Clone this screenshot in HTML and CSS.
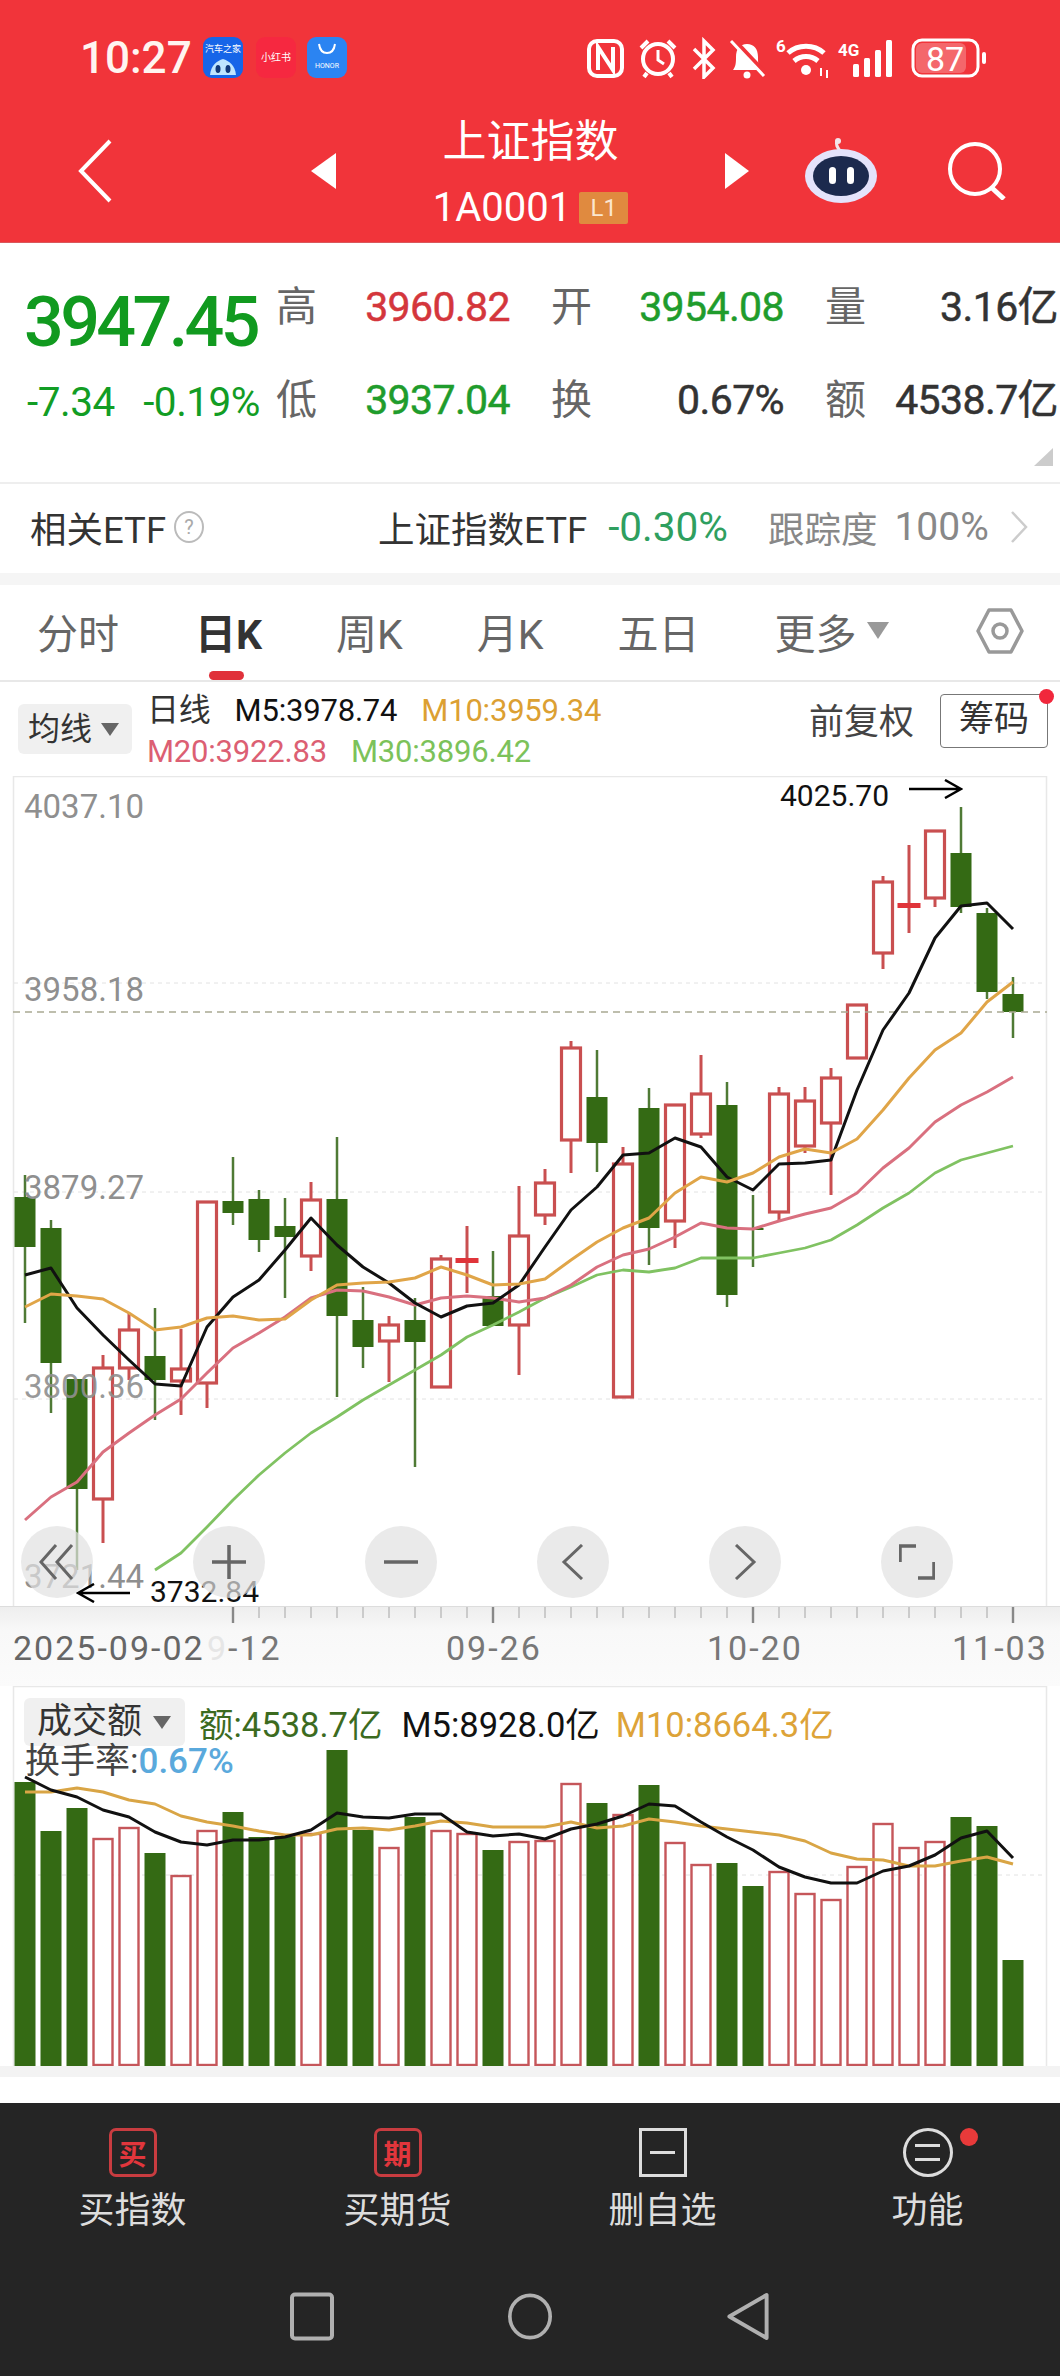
FILE: index.html
```html
<!DOCTYPE html>
<html lang="zh-CN">
<head>
    <meta charset="UTF-8">
    <meta name="viewport" content="width=device-width, initial-scale=1.0">
    <title>上证指数</title>
    <link rel="stylesheet" href="styles.css">
</head>
<body>
    <!-- 顶部红色区域 -->
    <header class="top">
        <div class="status">
            <span class="clock">10:27</span>
            <div class="app app-car">
                <span class="app-car-name">汽车之家</span>
                <svg class="app-car-face" viewBox="0 0 26 16"><path d="M0 16C1 6 7 2 13 0c6 2 12 6 13 16z" fill="#bfe6ff"/><ellipse cx="8" cy="10" rx="2.5" ry="4" fill="#123a7a"/><ellipse cx="18" cy="10" rx="2.5" ry="4" fill="#123a7a"/></svg>
            </div>
            <div class="app app-red">小红书</div>
            <div class="app app-honor">
                <svg class="honor-smile" viewBox="0 0 20 12"><path d="M2 1c1 7 4 9 8 9s7-2 8-9" fill="none" stroke="#fff" stroke-width="2"/></svg>
                <span class="honor-name">HONOR</span>
            </div>
            <svg class="status-icons" viewBox="585 37 399 42">
                <g fill="none" stroke="#fff" stroke-width="4">
                    <rect x="587" y="41" width="33" height="35" rx="8"/>
                    <path d="M596 70V47l15 23V47"/>
                    <circle cx="656" cy="59" r="15"/>
                    <path d="M656 50v10l6 4" stroke-width="3"/>
                    <path d="M639 48l7-7M673 48l-7-7M645 73l-3 4M667 73l3 4" stroke-width="4"/>
                    <path d="M692 49l19 19-9 9V41l9 9-19 19" stroke-width="3.5"/>
                    <path d="M731 70c3-4 3-8 3-13 0-8 4-13 11-13s11 5 11 13c0 5 0 9 3 13z" fill="#fff" stroke="none"/>
                    <path d="M732 41l33 35" stroke="#f1343a" stroke-width="6"/>
                    <path d="M729 41l33 35" stroke-width="3"/>
                    <path d="M786 53c10-9 26-9 36 0M792 61c7-6 17-6 24 0" stroke-width="5"/>
                </g>
                <circle cx="745" cy="75" r="3.5" fill="#fff"/>
                <circle cx="804" cy="70" r="5" fill="#fff"/>
                <text x="774" y="52" class="status-small">6</text>
                <path d="M819 68v8M825 78v-8" stroke="#fff" stroke-width="2"/>
                <text x="836" y="56" class="status-small">4G</text>
                <g fill="#fff">
                    <rect x="851" y="64" width="6" height="13" rx="1.5"/>
                    <rect x="862" y="58" width="6" height="19" rx="1.5"/>
                    <rect x="873" y="50" width="6" height="27" rx="1.5"/>
                    <rect x="884" y="40" width="6" height="37" rx="1.5"/>
                    <rect x="980" y="52" width="4" height="12" rx="2"/>
                </g>
                <rect x="911" y="40" width="65" height="36" rx="9" fill="none" stroke="#fff" stroke-width="3"/>
                <rect x="914" y="43" width="50" height="30" rx="6" fill="#fff" opacity="0.25"/>
                <text x="943" y="71" class="status-battery">87</text>
            </svg>
        </div>
        <div class="nav">
            <svg class="nav-back" viewBox="0 0 34 64"><path d="M32 2L3 32l29 30" fill="none" stroke="#fff" stroke-width="4"/></svg>
            <span class="tri-left"></span>
            <div class="nav-center">
                <div class="nav-title">上证指数</div>
                <div class="nav-code">1A0001 <span class="level">L1</span></div>
            </div>
            <span class="tri-right"></span>
            <svg class="nav-robot" viewBox="0 0 73 66">
                <path d="M36 14C33 10 30 7 32 3" fill="none" stroke="#f3e5ea" stroke-width="3"/>
                <circle cx="33" cy="3" r="3" fill="#f3e5ea"/>
                <ellipse cx="36" cy="38" rx="36" ry="27" fill="#e4e3fb"/>
                <ellipse cx="36" cy="38" rx="28" ry="20" fill="#1c2a4e"/>
                <rect x="24" y="29" width="7" height="17" rx="3.5" fill="#fff"/>
                <rect x="42" y="29" width="7" height="17" rx="3.5" fill="#fff"/>
            </svg>
            <svg class="nav-search" viewBox="0 0 59 58"><circle cx="28" cy="27" r="25" fill="none" stroke="#fff" stroke-width="4"/><path d="M45 46l12 11" stroke="#fff" stroke-width="5"/></svg>
        </div>
    </header>

    <!-- 行情数据 -->
    <section class="quote">
        <div class="price">3947.45</div>
        <div class="cell"><span class="cell-label">高</span><span class="cell-value up">3960.82</span></div>
        <div class="cell"><span class="cell-label">开</span><span class="cell-value down">3954.08</span></div>
        <div class="cell"><span class="cell-label">量</span><span class="cell-value">3.16亿</span></div>
        <div class="change"><span>-7.34</span><span>-0.19%</span></div>
        <div class="cell"><span class="cell-label">低</span><span class="cell-value down">3937.04</span></div>
        <div class="cell"><span class="cell-label">换</span><span class="cell-value">0.67%</span></div>
        <div class="cell"><span class="cell-label">额</span><span class="cell-value">4538.7亿</span></div>
        <span class="corner"></span>
    </section>

    <section class="etf">
        <span class="etf-name">相关ETF</span>
        <span class="etf-help">?</span>
        <span class="etf-fund">上证指数ETF</span>
        <span class="etf-change">-0.30%</span>
        <span class="etf-track">跟踪度</span>
        <span class="etf-percent">100%</span>
        <svg class="etf-arrow" viewBox="0 0 18 32"><path d="M2 1l14 15L2 31" fill="none" stroke="#ccc" stroke-width="2.5"/></svg>
    </section>

    <div class="band"></div>

    <nav class="tabs">
        <span class="tab">分时</span>
        <span class="tab tab-active">日K</span>
        <span class="tab">周K</span>
        <span class="tab">月K</span>
        <span class="tab">五日</span>
        <span class="tab tab-more">更多<i class="tab-tri"></i></span>
        <svg class="tab-gear" viewBox="0 0 48 46"><path d="M13 2h22l11 21-11 21H13L2 23z" fill="none" stroke="#999" stroke-width="3.5" stroke-linejoin="round"/><circle cx="24" cy="23" r="7" fill="none" stroke="#999" stroke-width="3.5"/></svg>
    </nav>

    <section class="legend">
        <div class="legend-btn">均线<i class="small-tri"></i></div>
        <div class="legend-lines">
            <div class="legend-row"><span class="legend-name">日线</span><span class="m5">M5:3978.74</span><span class="m10">M10:3959.34</span></div>
            <div class="legend-row"><span class="m20">M20:3922.83</span><span class="m30">M30:3896.42</span></div>
        </div>
        <span class="legend-fq">前复权</span>
        <div class="legend-chip">筹码<i class="chip-dot"></i></div>
    </section>

    <!-- K线图 -->
    <section class="kline">
        <svg id="klineChart" class="chart-svg" width="1060" height="830" viewBox="0 776 1060 830"></svg>
        <span class="scale scale-1">4037.10</span>
        <span class="scale scale-2">3958.18</span>
        <span class="scale scale-3">3879.27</span>
        <span class="scale scale-4">3800.36</span>
        <span class="scale scale-5">3721.44</span>
        <span class="mark mark-high">4025.70</span>
        <span class="mark mark-low">3732.84</span>
        <svg class="mark-arrow arrow-high" viewBox="0 0 54 20"><path d="M0 10h52M36 1l16 9-16 9" fill="none" stroke="#000" stroke-width="2.5"/></svg>
        <svg class="mark-arrow arrow-low" viewBox="0 0 54 20"><path d="M54 10H2M18 1L2 10l16 9" fill="none" stroke="#000" stroke-width="2.5"/></svg>
        <div class="zoom-bar">
            <span class="zoom-btn"><svg viewBox="0 0 36 36"><path d="M17 1L2 18l15 17M33 1L18 18l15 17" fill="none" stroke="#666" stroke-width="3"/></svg></span>
            <span class="zoom-btn"><svg viewBox="0 0 36 36"><path d="M1 18h34M18 1v34" fill="none" stroke="#666" stroke-width="3.5"/></svg></span>
            <span class="zoom-btn"><svg viewBox="0 0 36 36"><path d="M1 18h34" fill="none" stroke="#666" stroke-width="3.5"/></svg></span>
            <span class="zoom-btn"><svg viewBox="0 0 36 36"><path d="M27 1L9 18l18 17" fill="none" stroke="#666" stroke-width="3"/></svg></span>
            <span class="zoom-btn"><svg viewBox="0 0 36 36"><path d="M9 1l18 17L9 35" fill="none" stroke="#666" stroke-width="3"/></svg></span>
            <span class="zoom-btn"><svg viewBox="0 0 36 36"><path d="M17 2H1v16M19 34h16V18" fill="none" stroke="#666" stroke-width="3.5"/></svg></span>
        </div>
    </section>

    <section class="axis">
        <svg id="axisTicks" class="axis-ticks" width="1060" height="20"></svg>
        <span class="date date-first">2025-09-02</span>
        <span class="date date-second"><b class="date-ghost">9</b>-12</span>
        <span class="date date-third">09-26</span>
        <span class="date date-fourth">10-20</span>
        <span class="date date-last">11-03</span>
    </section>

    <!-- 成交额 -->
    <section class="volume">
        <svg id="volumeChart" class="chart-svg" width="1060" height="380" viewBox="0 1686 1060 380"></svg>
        <div class="volume-head">
            <div class="volume-btn">成交额<i class="small-tri"></i></div>
            <span class="vol-amount">额:4538.7亿</span>
            <span class="vol-m5">M5:8928.0亿</span>
            <span class="vol-m10">M10:8664.3亿</span>
        </div>
        <div class="turnover">换手率:<span class="turnover-value">0.67%</span></div>
    </section>
    <div class="volume-foot"></div>
    <div class="gap"></div>

    <!-- 底部工具栏 -->
    <footer class="bottom">
        <div class="tools">
            <div class="tool">
                <span class="tool-box tool-red">买</span>
                <span class="tool-name">买指数</span>
            </div>
            <div class="tool">
                <span class="tool-box tool-red">期</span>
                <span class="tool-name">买期货</span>
            </div>
            <div class="tool">
                <span class="tool-box tool-white"><i class="tool-minus"></i></span>
                <span class="tool-name">删自选</span>
            </div>
            <div class="tool">
                <span class="tool-box tool-round"><i class="tool-minus"></i><i class="tool-minus"></i><i class="tool-dot"></i></span>
                <span class="tool-name">功能</span>
            </div>
        </div>
        <div class="sysnav">
            <svg class="sys-icon" viewBox="0 0 44 48"><rect x="2" y="2" width="40" height="44" rx="3" fill="none" stroke="#b0b0b0" stroke-width="4"/></svg>
            <svg class="sys-icon" viewBox="0 0 48 50"><ellipse cx="24" cy="25" rx="22" ry="23" fill="none" stroke="#b0b0b0" stroke-width="4"/></svg>
            <svg class="sys-icon" viewBox="0 0 44 50"><path d="M41 3v44L3 25z" fill="none" stroke="#b0b0b0" stroke-width="4" stroke-linejoin="round"/></svg>
        </div>
    </footer>

    <script src="chart.js"></script>
</body>
</html>
```

FILE: styles.css
```css
* {
    box-sizing: border-box;
}
body {
    margin: 0;
    width: 1060px;
    background: #fff;
    font-family: Roboto, "Noto Sans CJK SC", sans-serif;
    color: #333;
    overflow-x: hidden;
}
i {
    font-style: normal;
}

/* top */
.top {
    height: 243px;
    background: #f1343a;
    color: #fff;
    border-bottom: 1px solid #d9585c;
}
.status {
    height: 100px;
    padding: 37px 0 0 80px;
    display: flex;
    align-items: flex-start;
}
.clock {
    width: 123px;
    font-size: 44px;
    font-weight: 500;
    line-height: 42px;
    color: #fff4f0;
}
.app {
    width: 40px;
    height: 41px;
    border-radius: 9px;
    position: relative;
    overflow: hidden;
    text-align: center;
}
.app-car {
    background: #1665e8;
}
.app-car-name {
    display: block;
    font-size: 9px;
    line-height: 14px;
    margin-top: 5px;
    white-space: nowrap;
}
.app-car-face {
    display: block;
    width: 26px;
    margin: 3px auto 0;
}
.app-red {
    margin-left: 13px;
    background: #f62840;
    font-size: 10px;
    line-height: 41px;
    white-space: nowrap;
}
.app-honor {
    margin-left: 11px;
    background: #2b84f2;
}
.honor-smile {
    display: block;
    width: 20px;
    margin: 6px auto 0;
}
.honor-name {
    display: block;
    font-size: 7px;
    line-height: 10px;
    margin-top: 6px;
}
.status-icons {
    width: 399px;
    height: 42px;
    margin-left: 240px;
}
.status-small {
    font-size: 17px;
    font-weight: 700;
    fill: #fff;
}
.status-battery {
    font-size: 34px;
    fill: #fff;
    text-anchor: middle;
}
.nav {
    height: 142px;
    padding-left: 78px;
    display: flex;
    align-items: center;
}
.nav-back {
    width: 34px;
    height: 64px;
}
.tri-left, .tri-right {
    width: 0;
    height: 0;
    border-top: 18px solid transparent;
    border-bottom: 18px solid transparent;
}
.tri-left {
    margin-left: 199px;
    border-right: 25px solid #fff;
}
.tri-right {
    border-left: 24px solid #fff;
}
.nav-center {
    width: 389px;
    text-align: center;
}
.nav-title {
    font-size: 44px;
    line-height: 54px;
}
.nav-code {
    margin-top: 20px;
    font-size: 40px;
    line-height: 38px;
    display: flex;
    justify-content: center;
    align-items: center;
    gap: 8px;
}
.level {
    width: 49px;
    height: 32px;
    background: #e08a3f;
    border-radius: 2px;
    font-size: 24px;
    line-height: 32px;
    color: #fbe6cf;
}
.nav-robot {
    width: 73px;
    height: 66px;
    margin-left: 56px;
}
.nav-search {
    width: 59px;
    height: 58px;
    margin-left: 69px;
}

/* quote */
.quote {
    height: 239px;
    padding: 33px 0 0 27px;
    display: grid;
    grid-template-columns: 208px 234px 233px 233px;
    grid-auto-rows: 62px;
    column-gap: 41px;
    row-gap: 31px;
    position: relative;
}
.price {
    font-size: 70px;
    line-height: 62px;
    margin: 15px 0 0 -3px;
    font-weight: 500;
    letter-spacing: -3.6px;
    color: #119a1f;
    white-space: nowrap;
}
.change {
    width: 233px;
    display: flex;
    justify-content: space-between;
    font-size: 40.5px;
    line-height: 62px;
    margin-top: 2px;
    color: #129d24;
    letter-spacing: -0.5px;
}
.cell {
    display: flex;
    justify-content: space-between;
    align-items: center;
    line-height: 62px;
}
.cell-label {
    font-size: 41px;
    color: #666;
}
.cell-value {
    font-size: 41px;
    letter-spacing: -0.6px;
    color: #333;
    -webkit-text-stroke: 0.5px currentColor;
}
.up {
    color: #d4363c;
}
.down {
    color: #1f9c2c;
}
.corner {
    position: absolute;
    right: 7px;
    bottom: 16px;
    width: 0;
    height: 0;
    border-bottom: 18px solid #ccc;
    border-left: 19px solid transparent;
}

/* etf */
.etf {
    height: 91px;
    padding: 0 0 3px 30px;
    border-top: 2px solid #eee;
    display: flex;
    align-items: center;
    font-size: 36.5px;
}
.etf-help {
    width: 30px;
    height: 32px;
    margin-left: 8px;
    border: 2px solid #bbb;
    border-radius: 50%;
    font-size: 20px;
    line-height: 28px;
    text-align: center;
    color: #aaa;
}
.etf-fund {
    margin-left: 174px;
}
.etf-change {
    margin-left: 21px;
    font-size: 40.5px;
    color: #2f9f5f;
}
.etf-track {
    margin-left: 40px;
    color: #888;
}
.etf-percent {
    margin-left: 17px;
    font-size: 39px;
    color: #888;
}
.etf-arrow {
    width: 18px;
    height: 32px;
    margin-left: 21px;
}
.band {
    height: 12px;
    background: #f5f5f5;
}

/* tabs */
.tabs {
    height: 97px;
    padding: 0 0 4px 37px;
    border-bottom: 2px solid #e8e8e8;
    display: flex;
    align-items: center;
    gap: 74px;
    font-size: 41px;
    color: #666;
}
.tab {
    position: relative;
}
.tab-active {
    margin-left: 2px;
    font-weight: 700;
    color: #333;
}
.tab-active::after {
    content: "";
    position: absolute;
    left: 14px;
    bottom: -19px;
    width: 35px;
    height: 9px;
    border-radius: 5px;
    background: #e0313a;
}
.tab-more {
    margin-left: 1px;
    display: flex;
    align-items: center;
}
.tab-tri {
    margin-left: 10px;
    border-top: 17px solid #999;
    border-left: 11px solid transparent;
    border-right: 11px solid transparent;
}
.tab-gear {
    width: 48px;
    height: 46px;
    margin-left: 13px;
}

/* legend */
.legend {
    height: 94px;
    padding-left: 18px;
    display: flex;
    font-size: 31px;
    position: relative;
}
.legend-btn {
    width: 114px;
    height: 50px;
    margin-top: 22px;
    padding-left: 10px;
    background: #f0f0f0;
    border-radius: 6px;
    font-size: 32px;
    line-height: 50px;
    display: flex;
    align-items: center;
}
.small-tri {
    margin-left: 9px;
    border-top: 13px solid #666;
    border-left: 9px solid transparent;
    border-right: 9px solid transparent;
}
.legend-lines {
    margin-left: 15px;
    padding-top: 8px;
}
.legend-row {
    height: 41px;
    line-height: 41px;
    display: flex;
    gap: 24px;
    letter-spacing: -0.2px;
}
.legend-name {
    font-size: 32px;
}
.m5 {
    color: #111;
}
.m10 {
    color: #dca032;
}
.m20 {
    color: #dc5f73;
}
.m30 {
    color: #7cc25a;
}
.legend-fq {
    margin-left: auto;
    margin-top: 17px;
    font-size: 35px;
    line-height: 48px;
    color: #444;
}
.legend-chip {
    width: 108px;
    height: 54px;
    margin: 12px 12px 0 26px;
    border: 1.5px solid #777;
    border-radius: 4px;
    font-size: 35px;
    line-height: 50px;
    text-align: center;
    position: relative;
}
.chip-dot {
    position: absolute;
    right: -7px;
    top: -6px;
    width: 15px;
    height: 15px;
    border-radius: 50%;
    background: #f1273c;
}

/* kline */
.kline {
    height: 830px;
    position: relative;
}
.chart-svg {
    display: block;
}
.scale {
    position: absolute;
    left: 24px;
    font-size: 33px;
    line-height: 40px;
    color: #8f8f8f;
}
.scale-1 {
    top: 11px;
}
.scale-2 {
    top: 194px;
}
.scale-3 {
    top: 392px;
}
.scale-4 {
    top: 591px;
    opacity: 0.9;
}
.scale-5 {
    top: 781px;
}
.mark {
    position: absolute;
    font-size: 30px;
    line-height: 36px;
    color: #111;
}
.mark-high {
    left: 780px;
    top: 2px;
}
.mark-low {
    left: 150px;
    top: 798px;
}
.mark-arrow {
    position: absolute;
    width: 54px;
    height: 20px;
}
.arrow-high {
    left: 909px;
    top: 3px;
}
.arrow-low {
    left: 76px;
    top: 807px;
}
.zoom-bar {
    position: absolute;
    left: 21px;
    top: 750px;
    display: flex;
    gap: 100px;
}
.zoom-btn {
    width: 72px;
    height: 72px;
    border-radius: 50%;
    background: rgba(225, 225, 225, 0.7);
    display: flex;
    align-items: center;
    justify-content: center;
}
.zoom-btn svg {
    width: 36px;
    height: 36px;
}

/* axis */
.axis {
    height: 80px;
    position: relative;
    background: linear-gradient(#eeeeee, #f8f8f8 30%, #fbfbfb);
    border-top: 1px solid #ddd;
}
.axis-ticks {
    position: absolute;
    left: 0;
    top: 0;
}
.date {
    position: absolute;
    top: 21px;
    font-size: 34px;
    line-height: 40px;
    letter-spacing: 2px;
    color: #777;
}
.date-first {
    left: 13px;
    color: #666;
}
.date-second {
    left: 207px;
}
.date-ghost {
    font-weight: 400;
    color: #e6e6e6;
}
.date-third {
    left: 446px;
}
.date-fourth {
    left: 707px;
}
.date-last {
    left: 952px;
}

/* volume */
.volume {
    height: 380px;
    position: relative;
}
.volume-head {
    position: absolute;
    left: 24px;
    top: 11px;
    display: flex;
    align-items: center;
    font-size: 34.5px;
    white-space: nowrap;
}
.volume-btn {
    width: 161px;
    height: 48px;
    padding-left: 13px;
    background: #f0f0f0;
    border-radius: 6px;
    font-size: 35px;
    line-height: 48px;
    display: flex;
    align-items: center;
}
.volume-btn .small-tri {
    margin-left: 11px;
}
.vol-amount {
    margin-left: 14px;
    color: #3c6b1f;
}
.vol-m5 {
    margin-left: 19px;
    color: #111;
}
.vol-m10 {
    margin-left: 16px;
    color: #dda338;
}
.turnover {
    position: absolute;
    left: 25px;
    top: 55px;
    font-size: 35px;
    line-height: 42px;
    color: #444;
}
.turnover-value {
    font-weight: 500;
    color: #5aa9dc;
}
.volume-foot {
    height: 11px;
    background: #f3f3f3;
}
.gap {
    height: 26px;
}

/* bottom */
.bottom {
    height: 273px;
    background: #252525;
}
.tools {
    display: flex;
    padding-top: 25px;
}
.tool {
    width: 265px;
    display: flex;
    flex-direction: column;
    align-items: center;
}
.tool-box {
    width: 48px;
    height: 49px;
    position: relative;
    display: flex;
    align-items: center;
    justify-content: center;
}
.tool-red {
    border: 3px solid #c93c40;
    border-radius: 7px;
    font-size: 28px;
    font-weight: 700;
    color: #e1363c;
}
.tool-white {
    border: 3px solid #ddd;
}
.tool-round {
    width: 50px;
    border: 3px solid #ddd;
    border-radius: 50%;
    flex-direction: column;
    gap: 11px;
}
.tool-minus {
    width: 25px;
    height: 3px;
    background: #ddd;
}
.tool-dot {
    position: absolute;
    left: 54px;
    top: -3px;
    width: 18px;
    height: 18px;
    border-radius: 50%;
    background: #e83a3a;
}
.tool-name {
    margin-top: 9px;
    font-size: 36px;
    line-height: 50px;
    color: #ddd;
}
.sysnav {
    margin-top: 56px;
    display: flex;
    justify-content: center;
    gap: 174px;
}
.sys-icon {
    width: 44px;
    height: 49px;
}
```

FILE: chart.js
```js
// [wick top, body top, body bottom, wick bottom, up?]
const candles = [
    [1175, 1197, 1247, 1323, 0], [1220, 1228, 1363, 1413, 0], [1379, 1379, 1489, 1570, 0], [1355, 1367, 1500, 1543, 1],
    [1313, 1329, 1369, 1380, 1], [1308, 1356, 1380, 1420, 0], [1329, 1368, 1382, 1415, 1], [1201, 1201, 1384, 1408, 1],
    [1157, 1201, 1213, 1225, 0], [1190, 1199, 1240, 1252, 0], [1198, 1226, 1237, 1298, 0], [1182, 1199, 1257, 1271, 1],
    [1137, 1199, 1316, 1397, 0], [1287, 1320, 1347, 1368, 0], [1316, 1324, 1342, 1382, 1], [1298, 1320, 1342, 1467, 0],
    [1255, 1258, 1388, 1388, 1], [1226, 1258, 1263, 1293, 2], [1251, 1296, 1326, 1326, 0], [1186, 1235, 1326, 1375, 1],
    [1169, 1182, 1216, 1225, 1], [1041, 1047, 1141, 1173, 1], [1050, 1097, 1143, 1172, 0], [1147, 1163, 1398, 1398, 1],
    [1088, 1108, 1228, 1265, 0], [1104, 1104, 1222, 1248, 1], [1055, 1093, 1135, 1138, 1], [1082, 1105, 1295, 1307, 0],
    [1195, 1228, 1230, 1267, 0], [1087, 1093, 1213, 1220, 1], [1087, 1100, 1147, 1153, 1], [1068, 1077, 1124, 1195, 1],
    [1004, 1004, 1059, 1059, 1], [876, 881, 954, 969, 1], [845, 903, 908, 933, 2], [830, 830, 899, 907, 1],
    [807, 853, 907, 913, 0], [908, 913, 992, 999, 0], [977, 994, 1012, 1038, 0]
];

const m5 = [1275, 1268, 1308, 1335, 1360, 1384, 1386, 1327, 1297, 1280, 1250, 1218, 1245, 1267, 1283, 1303, 1317, 1306, 1303, 1285, 1247, 1210, 1187, 1155, 1153, 1138, 1147, 1177, 1190, 1164, 1163, 1160, 1090, 1030, 993, 938, 906, 903, 929];
const m10 = [1307, 1294, 1296, 1299, 1313, 1330, 1327, 1318, 1316, 1320, 1319, 1300, 1285, 1283, 1282, 1278, 1267, 1275, 1285, 1284, 1279, 1260, 1242, 1228, 1218, 1193, 1177, 1182, 1173, 1157, 1149, 1153, 1139, 1110, 1078, 1050, 1033, 1002, 982];
const m20 = [1520, 1497, 1482, 1452, 1433, 1415, 1399, 1373, 1348, 1333, 1317, 1298, 1290, 1291, 1297, 1305, 1298, 1296, 1298, 1302, 1298, 1285, 1267, 1255, 1249, 1237, 1223, 1228, 1229, 1221, 1214, 1208, 1193, 1168, 1148, 1122, 1105, 1092, 1077];
const m30 = [null, null, null, null, null, 1570, 1553, 1527, 1500, 1475, 1453, 1433, 1417, 1400, 1385, 1370, 1355, 1337, 1325, 1312, 1298, 1287, 1275, 1270, 1272, 1268, 1258, 1258, 1258, 1253, 1248, 1240, 1225, 1208, 1193, 1173, 1160, 1153, 1146];

// [bar top, up?]
const bars = [
    [1782, 0], [1831, 0], [1808, 0], [1838, 1], [1827, 1], [1853, 0], [1875, 1], [1830, 1], [1812, 0], [1837, 0],
    [1836, 0], [1833, 1], [1750, 0], [1830, 0], [1847, 1], [1817, 0], [1830, 1], [1833, 1], [1850, 0], [1841, 1],
    [1840, 1], [1783, 1], [1803, 0], [1814, 1], [1785, 0], [1842, 1], [1864, 1], [1863, 0], [1886, 0], [1871, 1],
    [1893, 1], [1899, 1], [1866, 1], [1823, 1], [1847, 1], [1841, 1], [1817, 0], [1826, 0], [1960, 0]
];
const volM5 = [1777, 1790, 1797, 1810, 1817, 1832, 1842, 1845, 1840, 1840, 1837, 1830, 1813, 1817, 1818, 1814, 1814, 1832, 1836, 1834, 1839, 1829, 1824, 1816, 1804, 1806, 1822, 1837, 1850, 1867, 1877, 1883, 1883, 1871, 1866, 1855, 1838, 1831, 1858];
const volM10 = [1792, 1792, 1788, 1792, 1800, 1804, 1816, 1822, 1826, 1831, 1835, 1835, 1829, 1828, 1830, 1826, 1821, 1823, 1827, 1827, 1827, 1822, 1828, 1826, 1819, 1822, 1826, 1829, 1832, 1835, 1841, 1853, 1859, 1860, 1866, 1866, 1861, 1857, 1864];

const RED = "#c94f50";
const BRIGHT = "#e0343a";
const GREEN = "#346a14";
const WICK = "#4f7a35";

function centerX(i) {
    return 25 + 26 * i;
}

function drawLine(values, color, width) {
    const points = [];
    values.forEach((y, i) => {
        if (y !== null) points.push(centerX(i) + "," + y);
    });
    return `<polyline points="${points.join(" ")}" fill="none" stroke="${color}" stroke-width="${width}" stroke-linejoin="round"/>`;
}

function drawFrame(top, bottom) {
    return `<path d="M13.5 ${bottom}V${top}H1046.5V${bottom}" fill="none" stroke="#e8e8e8" stroke-width="1.5"/>`;
}

function drawGrid(y) {
    return `<line x1="14" x2="1046" y1="${y}" y2="${y}" stroke="#e2e2e2" stroke-dasharray="4 4"/>`;
}

function drawCandle(c, i) {
    const x = centerX(i);
    const [wickTop, bodyTop, bodyBottom, wickBottom, kind] = c;
    if (kind === 0) {
        return `<line x1="${x}" x2="${x}" y1="${wickTop}" y2="${wickBottom}" stroke="${WICK}" stroke-width="2.5"/>` +
            `<rect x="${x - 10.5}" y="${bodyTop}" width="21" height="${bodyBottom - bodyTop}" fill="${GREEN}"/>`;
    }
    if (kind === 2) {
        return `<line x1="${x}" x2="${x}" y1="${wickTop}" y2="${wickBottom}" stroke="${RED}" stroke-width="3"/>` +
            `<rect x="${x - 11.5}" y="${bodyTop}" width="23" height="${bodyBottom - bodyTop}" fill="${BRIGHT}"/>`;
    }
    return `<line x1="${x}" x2="${x}" y1="${wickTop}" y2="${wickBottom}" stroke="${RED}" stroke-width="3"/>` +
        `<rect x="${x - 9.5}" y="${bodyTop + 1}" width="19" height="${bodyBottom - bodyTop - 2}" fill="#fff" stroke="${RED}" stroke-width="3.2"/>`;
}

function drawBar(b, i) {
    const x = centerX(i);
    if (b[1]) {
        return `<rect x="${x - 9.5}" y="${b[0] + 1}" width="19" height="${2064 - b[0]}" fill="#fff" stroke="#c5565a" stroke-width="2.4"/>`;
    }
    return `<rect x="${x - 10.5}" y="${b[0]}" width="21" height="${2066 - b[0]}" fill="${GREEN}"/>`;
}

// K线
let html = drawFrame(776.5, 1606);
[983, 1192, 1399].forEach(y => { html += drawGrid(y); });
html += candles.map(drawCandle).join("");
html += `<line x1="13" x2="1047" y1="1012" y2="1012" stroke="#a9a992" stroke-width="1.6" stroke-dasharray="7 5"/>`;
html += drawLine(m30, "#80c262", 2.8);
html += drawLine(m20, "#d9707f", 3);
html += drawLine(m5, "#111", 3);
html += drawLine(m10, "#e0a548", 3);
document.getElementById("klineChart").innerHTML = html;

// 时间轴刻度
let ticks = "";
for (let i = 8; i < 39; i++) {
    const major = (i - 8) % 10 === 0;
    ticks += `<line x1="${centerX(i)}" x2="${centerX(i)}" y1="0" y2="${major ? 16 : 11}" stroke="${major ? "#888" : "#bbb"}" stroke-width="${major ? 2.4 : 1.4}"/>`;
}
document.getElementById("axisTicks").innerHTML = ticks;

// 成交额
let vol = drawFrame(1686.5, 2066);
vol += drawGrid(1875);
vol += bars.map(drawBar).join("");
vol += drawLine(volM10, "#d9a545", 3);
vol += drawLine(volM5, "#111", 3);
document.getElementById("volumeChart").innerHTML = vol;
```
